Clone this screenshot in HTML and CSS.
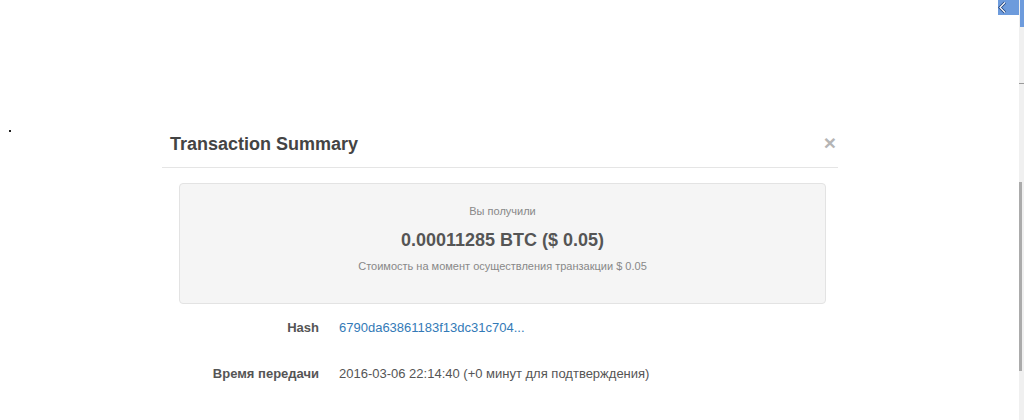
FILE: index.html
```html
<!DOCTYPE html>
<html lang="ru">
<head>
  <meta charset="UTF-8" />
  <title>Transaction Summary</title>
  <link rel="stylesheet" href="styles.css">
</head>
<body>
  <div class="page">
    <span class="stray"></span>
    <div class="tab-toggle">
      <svg width="21" height="15" viewBox="0 0 21 15">
        <polyline points="7,2.5 2,7.5 7,12.5" fill="none" stroke="#23457e" stroke-width="3"/>
        <polyline points="7,2.5 2,7.5 7,12.5" fill="none" stroke="#fff" stroke-width="1.2"/>
      </svg>
    </div>

    <div class="modal">
      <div class="modal-header">
        <h4 class="modal-title">Transaction Summary</h4>
        <button class="close">&times;</button>
      </div>
      <div class="modal-body">
        <div class="well">
          <p class="muted">Вы получили</p>
          <p class="amount">0.00011285 BTC ($ 0.05)</p>
          <p class="muted note">Стоимость на момент осуществления транзакции $ 0.05</p>
        </div>
        <dl class="details">
          <dt>Hash</dt>
          <dd><a href="#">6790da63861183f13dc31c704...</a></dd>
          <dt>Время передачи</dt>
          <dd>2016-03-06 22:14:40 (+0 минут для подтверждения)</dd>
        </dl>
      </div>
    </div>
  </div>

  <div class="scrollbar">
    <div class="scroll-top"></div>
    <div class="scroll-line"></div>
    <div class="scroll-thumb"></div>
  </div>
</body>
</html>
```

FILE: styles.css
```css
html, body {
  height: 100%;
}

body {
  margin: 0;
  display: flex;
  overflow: hidden;
  background: #fff;
  font-family: 'Liberation Sans', Arial, sans-serif;
  color: #555;
}

.page {
  position: relative;
  flex: 1;
}

/* stray dot on the backdrop */
.stray {
  position: absolute;
  left: 9px;
  top: 130px;
  width: 2px;
  height: 2px;
  background: #222;
}

.tab-toggle {
  position: absolute;
  top: 0;
  right: 0;
  width: 21px;
  height: 15px;
  background: #6d9bdc;
}

.tab-toggle svg {
  display: block;
}

.modal {
  width: 676px;
  margin: 116px 0 0 162px;
}

.modal-header {
  display: flex;
  justify-content: space-between;
  align-items: flex-start;
  padding: 15px 2px 10px 8px;
  border-bottom: 1px solid #e5e5e5;
}

.modal-title {
  margin: 0;
  font-size: 18px;
  line-height: 26px;
  font-weight: bold;
  color: #444;
}

.close {
  padding: 0;
  margin-top: 1px;
  border: none;
  background: none;
  font-family: 'Liberation Sans', Arial, sans-serif;
  font-size: 21px;
  font-weight: bold;
  line-height: 21px;
  color: #b5b5b5;
  cursor: pointer;
}

.modal-body {
  padding: 15px 12px 0 17px;
}

.well {
  padding: 20px 10px 29px;
  background: #f5f5f5;
  border: 1px solid #e3e3e3;
  border-radius: 4px;
  text-align: center;
}

.well p {
  margin: 8px 0 0;
}

.well p:first-child {
  margin-top: 0;
}

.well .note {
  margin-top: 6px;
}

.muted {
  font-size: 11px;
  line-height: 15px;
  color: #888;
}

.amount {
  font-size: 18px;
  line-height: 26px;
  font-weight: bold;
  color: #555;
}

.details {
  display: grid;
  grid-template-columns: 140px 1fr;
  column-gap: 20px;
  row-gap: 26px;
  margin: 14px 0 0;
  font-size: 13px;
  line-height: 20px;
}

.details dt {
  text-align: right;
  font-weight: bold;
  color: #555;
}

.details dd {
  margin: 0;
  color: #555;
}

.details a {
  color: #337ab7;
  text-decoration: none;
}

.scrollbar {
  position: relative;
  width: 5px;
  background: #f0f0f0;
}

.scroll-top {
  height: 27px;
  margin-left: 1px;
  background: #6d9bdc;
}

.scroll-line {
  height: 1px;
  margin-top: 56px;
  background: #9a9a9a;
}

.scroll-thumb {
  width: 3px;
  height: 189px;
  margin-top: 98px;
  background: #ababab;
}
```
